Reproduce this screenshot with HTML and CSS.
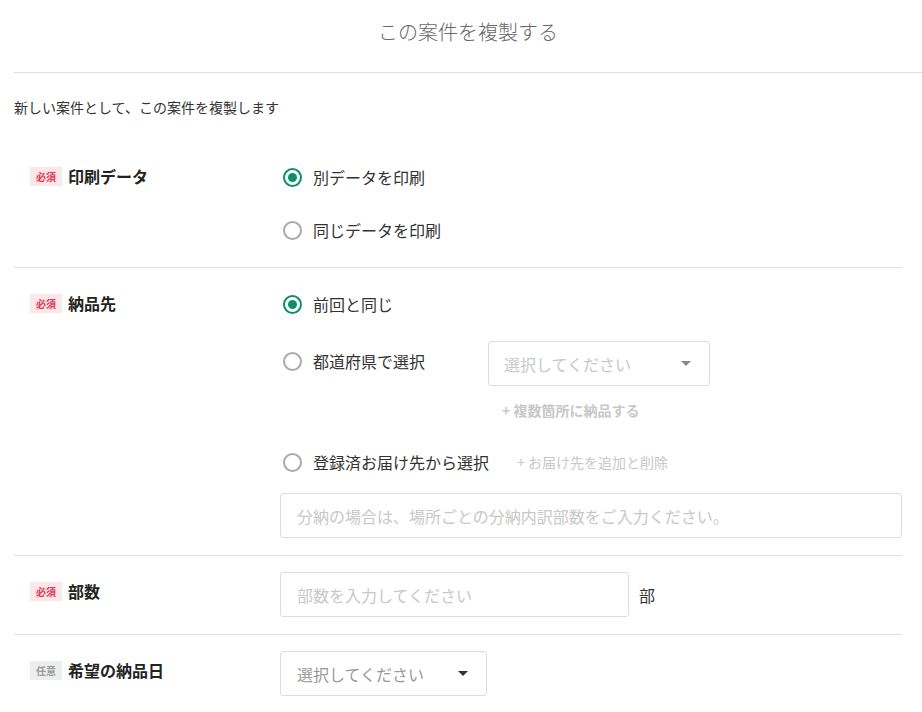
FILE: index.html
```html
<!DOCTYPE html>
<html lang="ja">
<head>
  <meta charset="UTF-8">
  <meta name="viewport" content="width=device-width, initial-scale=1">
  <title>この案件を複製する</title>
  <link rel="stylesheet" href="styles.css">
</head>
<body>

<div class="modal">
  <h2 class="modal-title">この案件を複製する</h2>

  <div class="modal-body">
    <p class="lead">新しい案件として、この案件を複製します</p>

    <div class="field">
      <div class="field-label"><span class="badge required">必須</span>印刷データ</div>
      <div class="field-content">
        <label class="radio-row"><input type="radio" name="data" checked><span>別データを印刷</span></label>
        <label class="radio-row"><input type="radio" name="data"><span>同じデータを印刷</span></label>
      </div>
    </div>

    <div class="field">
      <div class="field-label"><span class="badge required">必須</span>納品先</div>
      <div class="field-content">
        <label class="radio-row"><input type="radio" name="dest" checked><span>前回と同じ</span></label>

        <div class="pref-row">
          <label class="radio-row pref-radio"><input type="radio" name="dest"><span>都道府県で選択</span></label>
          <div class="pref-select">
            <div class="select is-disabled">選択してください<span class="caret"></span></div>
            <a class="add-link bold">+ 複数箇所に納品する</a>
          </div>
        </div>

        <div class="registered-row">
          <label class="radio-row"><input type="radio" name="dest"><span>登録済お届け先から選択</span></label>
          <a class="add-link">+ お届け先を追加と削除</a>
        </div>

        <input class="text-input wide" type="text" placeholder="分納の場合は、場所ごとの分納内訳部数をご入力ください。">
      </div>
    </div>

    <div class="field">
      <div class="field-label"><span class="badge required">必須</span>部数</div>
      <div class="field-content inline">
        <input class="text-input copies" type="text" placeholder="部数を入力してください">
        <span class="unit">部</span>
      </div>
    </div>

    <div class="field">
      <div class="field-label"><span class="badge optional">任意</span>希望の納品日</div>
      <div class="field-content">
        <div class="select date">選択してください<span class="caret"></span></div>
      </div>
    </div>
  </div>
</div>

</body>
</html>
```

FILE: styles.css
```css
body {
  margin: 0;
  background-color: #ffffff;
  font-family: "Noto Sans CJK JP", "Noto Sans", sans-serif;
  color: #333;
}

.modal {
  padding-left: 14px;
}

.modal-title {
  margin: 0;
  padding: 19px 0 27px;
  line-height: 26px;
  font-size: 20px;
  font-weight: 300;
  color: #666;
  text-align: center;
  border-bottom: 1px solid #e0e0e0;
}

.modal-body {
  margin-right: 20px;
}

.lead {
  margin: 0;
  padding: 24px 0;
  line-height: 20px;
  font-size: 14px;
  color: #333;
}

.field {
  display: flex;
  padding: 16px 0 17px;
  border-bottom: 1px solid #e0e0e0;
}

.field:last-child {
  border-bottom: none;
}

.field-label {
  width: 250px;
  padding-left: 16px;
  margin-top: 8px;
  display: flex;
  align-items: center;
  height: 22px;
  font-size: 16px;
  font-weight: 700;
  color: #222;
}

.badge {
  display: inline-block;
  width: 32px;
  height: 19px;
  line-height: 19px;
  margin-right: 6px;
  font-size: 10px;
  font-weight: 700;
  text-align: center;
}

.badge.required {
  background-color: #fde6ea;
  color: #e0374f;
}

.badge.optional {
  background-color: #eceeee;
  color: #999;
}

.field-content {
  flex: 1;
  display: flex;
  flex-direction: column;
}

.field-content.inline {
  flex-direction: row;
  align-items: center;
}

.radio-row {
  display: flex;
  align-items: center;
  height: 40px;
  font-size: 16px;
  color: #333;
  cursor: pointer;
}

.radio-row + .radio-row {
  margin-top: 13px;
}

.radio-row input {
  appearance: none;
  -webkit-appearance: none;
  width: 19px;
  height: 19px;
  margin: 0 11px 0 3px;
  border: 2px solid #aaa;
  border-radius: 50%;
  box-sizing: border-box;
  display: grid;
  place-items: center;
}

.radio-row input:checked {
  border-color: #0b8f6c;
}

.radio-row input:checked::after {
  content: "";
  width: 9px;
  height: 9px;
  border-radius: 50%;
  background-color: #0b8f6c;
}

.pref-row {
  display: flex;
  margin-top: 17px;
}

.pref-radio {
  width: 208px;
  height: 40px;
}

.pref-select {
  display: flex;
  flex-direction: column;
}

.select {
  box-sizing: border-box;
  height: 45px;
  padding: 0 18px 0 16px;
  border: 1px solid #ddd;
  border-radius: 3px;
  display: flex;
  align-items: center;
  justify-content: space-between;
  font-size: 16px;
  color: #999;
}

.select.is-disabled {
  width: 222px;
  height: 45px;
  padding-left: 15px;
  color: #c8c8c8;
}

.select.date {
  width: 207px;
}

.caret {
  width: 0;
  height: 0;
  border-left: 5px solid transparent;
  border-right: 5px solid transparent;
  border-top: 5px solid #333;
}

.select.is-disabled .caret {
  border-top-color: #888;
}

.add-link {
  font-size: 14px;
  color: #c8c8c8;
  line-height: 20px;
  cursor: pointer;
}

.pref-select .add-link {
  margin: 14px 0 0 14px;
}

.add-link.bold {
  font-weight: 700;
}

.registered-row {
  display: flex;
  align-items: center;
  margin-top: 22px;
}

.registered-row .add-link {
  margin-left: 28px;
}

.text-input {
  box-sizing: border-box;
  height: 45px;
  padding: 0 16px;
  border: 1px solid #ddd;
  border-radius: 3px;
  font-family: inherit;
  font-size: 16px;
  color: #333;
}

.text-input::placeholder {
  color: #c8c8c8;
}

.text-input.wide {
  width: 100%;
  margin-top: 11px;
}

.text-input.copies {
  width: 349px;
}

.unit {
  margin-left: 10px;
  font-size: 16px;
  color: #333;
}
```
